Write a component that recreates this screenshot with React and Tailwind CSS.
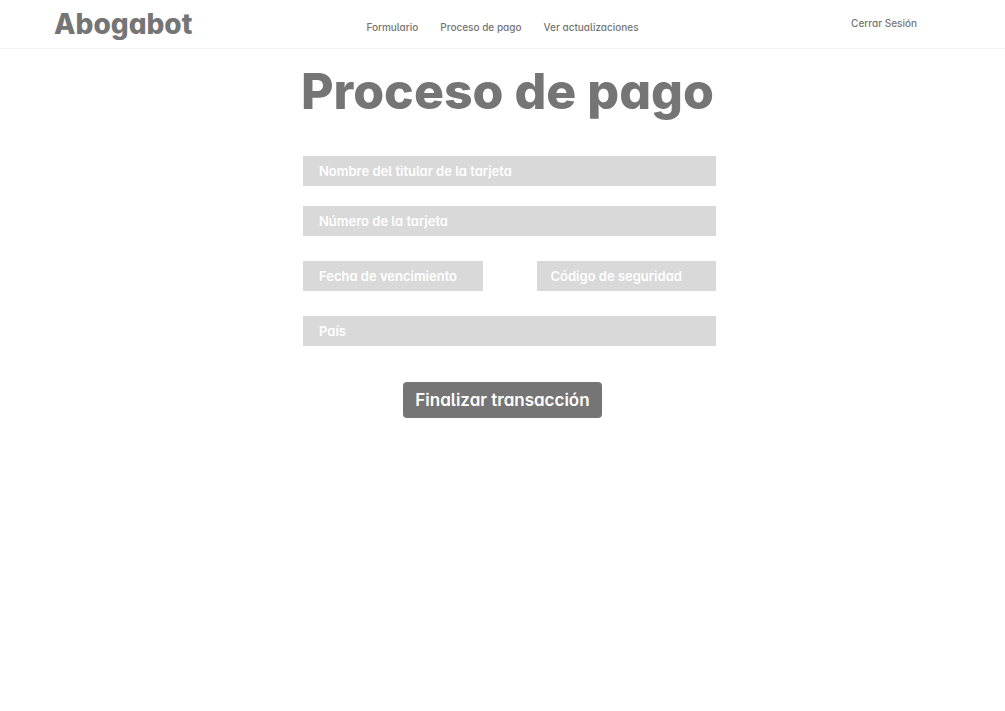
const navItems = ["Formulario", "Proceso de pago", "Ver actualizaciones"];

function Field({ id, label, inset = "px-4", className = "" }) {
  return (
    <div className={`flex h-[30px] items-center gap-2 bg-[#d9d9d9] text-[13px] leading-5 font-semibold text-white ${inset} ${className}`}>
      <label htmlFor={id} className="whitespace-nowrap">
        {label}
      </label>
      <input id={id} name={id} type="text" className="w-0 min-w-0 flex-1 bg-transparent text-[#757575] outline-none" />
    </div>
  );
}

export default function App() {
  return (
    <div className="min-h-screen bg-white font-['Inter',sans-serif] text-[#757575] [font-feature-settings:'cv11'_1,'cv05'_1]">
      <header className="grid h-[49px] grid-cols-[1fr_auto_1fr] items-center border-b border-[#f1f1f8]">
        <a href="#" className="pl-[54px] text-[28px] leading-8 font-extrabold [font-feature-settings:'cv11'_1]">
          Abogabot
        </a>
        <nav className="flex gap-[22px] pt-[5px] text-[10px] leading-4 font-medium">
          {navItems.map((item) => (
            <a key={item} href="#">
              {item}
            </a>
          ))}
        </nav>
        <a href="#" className="justify-self-end pr-[88px] pb-[2px] text-[10px] leading-4 font-medium">
          Cerrar Sesión
        </a>
      </header>

      <main className="flex flex-col items-center pt-3">
        <h1 className="pl-[10px] text-center text-[50px] leading-[60px] font-extrabold [font-feature-settings:'cv11'_1]">
          Proceso de pago
        </h1>
        <form className="mt-[35px] flex w-full flex-col items-center" onSubmit={(e) => e.preventDefault()}>
          <div className="w-full max-w-[427px] pl-[14px]">
            <Field id="titular" label="Nombre del titular de la tarjeta" />
            <Field id="numero" label="Número de la tarjeta" className="mt-5" />
            <div className="mt-[25px] grid grid-cols-2 gap-[54px]">
              <Field id="vencimiento" label="Fecha de vencimiento" />
              <Field id="codigo" label="Código de seguridad" inset="px-[14px]" />
            </div>
            <Field id="pais" label="País" className="mt-[25px]" />
          </div>
          <button
            type="submit"
            className="mt-9 h-9 rounded bg-[#757575] px-3 text-[17px] leading-9 font-semibold text-white"
          >
            Finalizar transacción
          </button>
        </form>
      </main>
    </div>
  );
}
